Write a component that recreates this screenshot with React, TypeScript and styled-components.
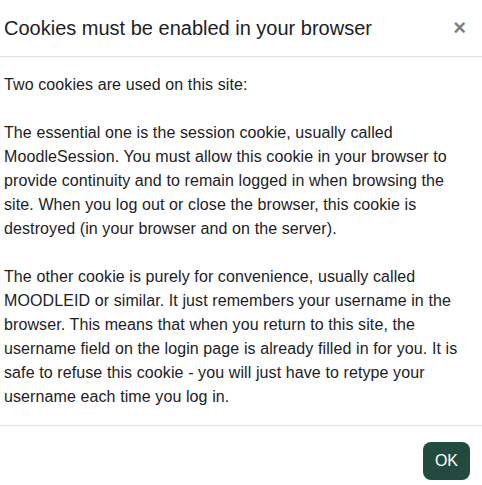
import React from "react";
import styled, { createGlobalStyle } from "styled-components";

const Global = createGlobalStyle`
  html, body { margin: 0; padding: 0; background: #fff; }
  body { font-family: "Liberation Sans", Arial, sans-serif; color: #1d2125; }
`;

const Modal = styled.div`
  width: 482px;
  display: flex;
  flex-direction: column;
`;

const Header = styled.div`
  display: flex;
  align-items: center;
  justify-content: space-between;
  padding: 16px 16px 16px 4px;
  border-bottom: 1px solid #dee2e6;
`;

const Title = styled.h5`
  margin: 0;
  font-size: 20px;
  line-height: 24px;
  font-weight: 400;
`;

const Close = styled.button`
  border: 0;
  background: none;
  padding: 0;
  font-family: "Liberation Sans", Arial, sans-serif;
  font-size: 22px;
  font-weight: 700;
  line-height: 24px;
  color: #000;
  opacity: 0.5;
  cursor: pointer;
`;

const Body = styled.div`
  padding: 16px 4px 16px 4px;
  font-size: 16px;
  line-height: 24px;
  letter-spacing: 0.1px;
`;

const Para = styled.p`
  margin: 0 0 24px;
  &:last-child { margin-bottom: 0; }
`;

const Footer = styled.div`
  display: flex;
  justify-content: flex-end;
  padding: 16px 12px 5px;
  border-top: 1px solid #dee2e6;
`;

const Button = styled.button`
  background: #234a3f;
  color: #fff;
  border: 0;
  border-radius: 8px;
  height: 38px;
  padding: 0 12px;
  font-family: "Liberation Sans", Arial, sans-serif;
  font-size: 16px;
`;

export default function App() {
  return (
    <>
      <Global />
      <Modal>
        <Header>
          <Title>Cookies must be enabled in your browser</Title>
          <Close aria-label="Close">×</Close>
        </Header>
        <Body>
          <Para>Two cookies are used on this site:</Para>
          <Para>
            The essential one is the session cookie, usually called MoodleSession. You must allow this cookie in your browser to provide continuity and to remain logged in when browsing the site. When you log out or close the browser, this cookie is destroyed (in your browser and on the server).
          </Para>
          <Para>
            The other cookie is purely for convenience, usually called MOODLEID or similar. It just remembers your username in the browser. This means that when you return to this site, the username field on the login page is already filled in for you. It is safe to refuse this cookie - you will just have to retype your username each time you log in.
          </Para>
        </Body>
        <Footer>
          <Button>OK</Button>
        </Footer>
      </Modal>
    </>
  );
}
